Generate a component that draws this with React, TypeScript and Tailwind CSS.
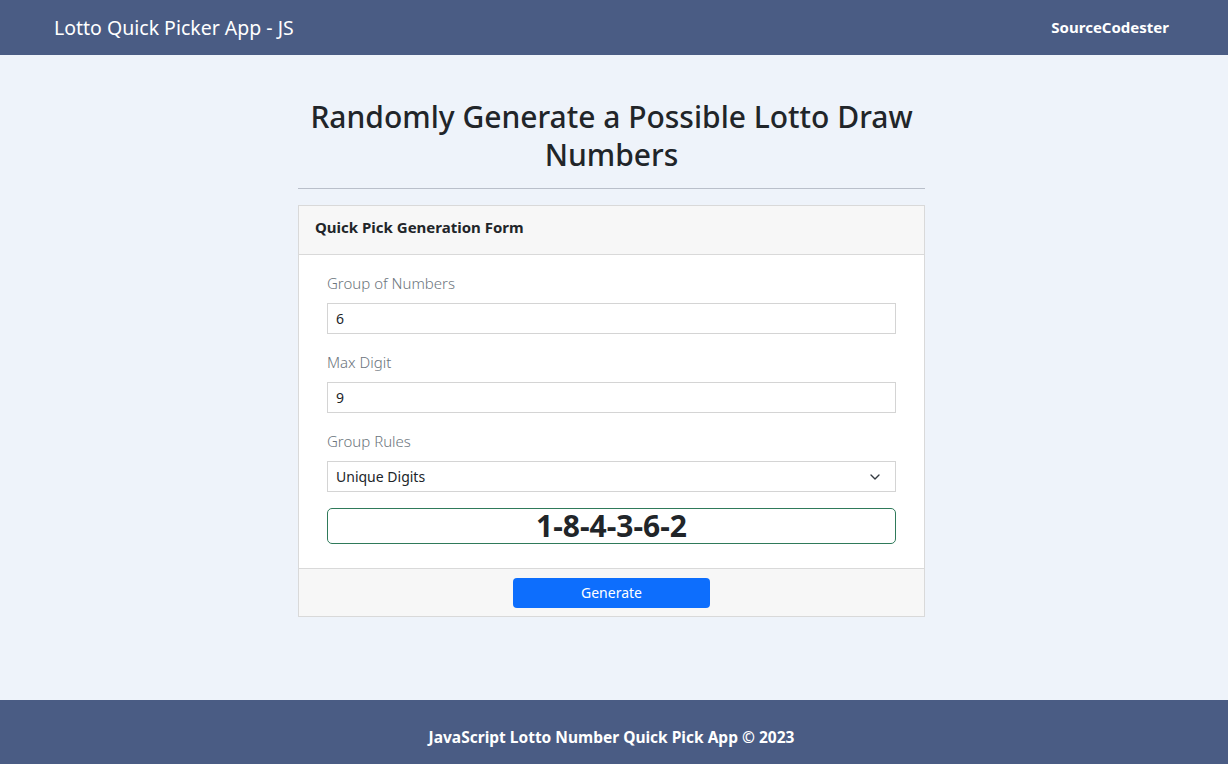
import { ChevronDown } from 'lucide-react';

const font = 'font-["Noto_Sans","Open_Sans",sans-serif]';

function Field({ label, value }: { label: string; value: string }) {
  return (
    <div className="mb-[16px]">
      <label className="block text-[15px] leading-6 font-light text-[#6c757d] mb-2">{label}</label>
      <div className="h-[31px] border border-[#d4d4d4] bg-white px-2 flex items-center text-[14px] text-[#212529]">
        {value}
      </div>
    </div>
  );
}

export default function App() {
  return (
    <div className={`min-h-screen flex flex-col bg-[#eef3fa] ${font}`}>
      <header className="h-[55px] bg-[#4a5c84] flex items-center justify-between pl-[54px] pr-[59px]">
        <span className="text-[19.5px] text-white">Lotto Quick Picker App - JS</span>
        <span className="text-[15px] font-bold text-white">SourceCodester</span>
      </header>

      <main className="flex-1 flex flex-col items-center pt-[43px] pr-[5px]">
        <div className="w-[627px]">
          <h2 className="text-[30px] leading-[38px] font-medium text-[#212529] text-center">
            Randomly Generate a Possible Lotto Draw Numbers
          </h2>
          <hr className="mt-[14px] mb-[16px] border-t border-[#b9bfca]" />

          <div className="border border-[#d9d9d9] bg-white">
            <div className="h-[49px] bg-[#f7f7f7] border-b border-[#d9d9d9] px-4 pb-[6px] flex items-center">
              <span className="text-[15px] font-bold text-[#212529]">Quick Pick Generation Form</span>
            </div>

            <div className="px-7 pt-[16px] pb-[24px]">
              <Field label="Group of Numbers" value="6" />
              <Field label="Max Digit" value="9" />
              <div className="mb-[16px]">
                <label className="block text-[15px] leading-6 font-light text-[#6c757d] mb-2">Group Rules</label>
                <div className="h-[31px] border border-[#d4d4d4] bg-white pl-2 pr-3 flex items-center justify-between text-[14px] text-[#212529]">
                  <span>Unique Digits</span>
                  <ChevronDown className="w-4 h-4 text-[#343a40]" strokeWidth={2} />
                </div>
              </div>
              <div className="h-[36px] border border-[#2f7a5a] rounded-[5px] flex items-center justify-center">
                <span className="text-[30px] font-bold text-[#212529] leading-none">1-8-4-3-6-2</span>
              </div>
            </div>

            <div className="h-[48px] bg-[#f7f7f7] border-t border-[#d9d9d9] flex items-center justify-center">
              <button className="w-[197px] h-[30px] rounded-[4px] bg-[#0d6efd] text-white text-[14px]">
                Generate
              </button>
            </div>
          </div>
        </div>
      </main>

      <footer className="h-[64px] bg-[#4a5c84] flex items-center justify-center pr-[5px] pt-3">
        <span className="text-[15.5px] font-bold text-white">JavaScript Lotto Number Quick Pick App © 2023</span>
      </footer>
    </div>
  );
}
